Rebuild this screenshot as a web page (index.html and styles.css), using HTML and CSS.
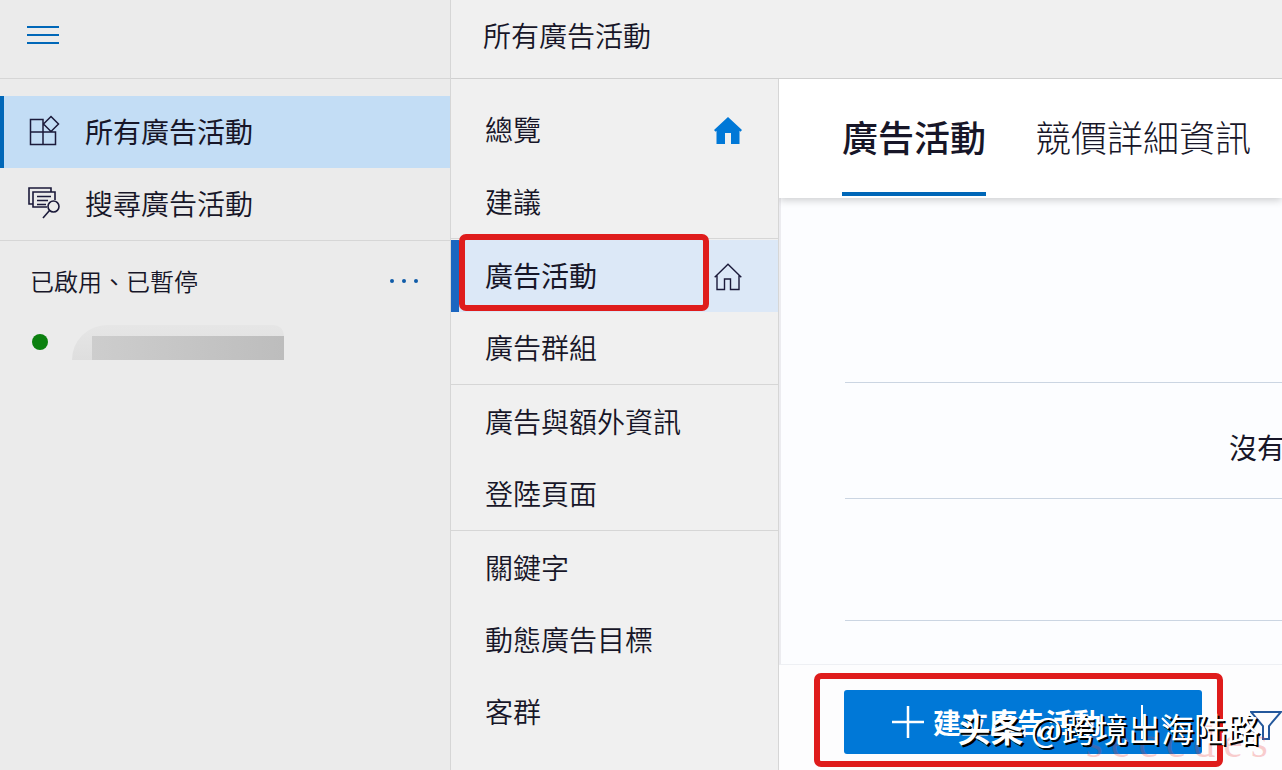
FILE: index.html
```html
<!DOCTYPE html>
<html lang="zh-Hant">
<head>
    <meta charset="UTF-8">
    <meta name="viewport" content="width=device-width, initial-scale=1.0">
    <title>所有廣告活動</title>
    <link rel="stylesheet" href="styles.css">
</head>
<body>
    <aside class="sidebar">
        <div class="sidebar-top">
            <button type="button" class="icon-button" aria-label="選單">
                <svg width="32" height="20" viewBox="0 0 32 20" stroke="#0067b8" stroke-width="2"><path d="M0 2h32M0 10h32M0 18h32"/></svg>
            </button>
        </div>
        <nav class="main-nav">
            <a href="#" class="main-link active">
                <svg width="32" height="32" viewBox="0 0 32 32" fill="none" stroke="#1b1a3a" stroke-width="1.5"><path d="M15 6V4.500H2.500v25h25V17H2.500M15 29.500V12M15 4.500V17M23 1.500l7.500 7.500-7.500 7.500L15.500 9z"/></svg>
                <span>所有廣告活動</span>
            </a>
            <a href="#" class="main-link">
                <svg width="32" height="32" viewBox="0 0 32 32" fill="none" stroke="#1b1a3a" stroke-width="1.600"><path d="M5 17H1V1h22v4M19 20H5V5h22v8M9 9.500h14M9 13.500h11M9 17.500h9"/><circle cx="25.500" cy="19.500" r="5.500"/><path d="M21.500 23.500L15 31"/></svg>
                <span>搜尋廣告活動</span>
            </a>
        </nav>
        <div class="status-filter">
            <span>已啟用、已暫停</span>
            <button type="button" class="icon-button" aria-label="更多">
                <svg width="32" height="8" viewBox="0 0 32 8" fill="#0f5ba8"><circle cx="4" cy="4" r="2"/><circle cx="16" cy="4" r="2"/><circle cx="28" cy="4" r="2"/></svg>
            </button>
        </div>
        <div class="account">
            <span class="dot"></span>
            <span class="account-name"></span>
        </div>
    </aside>

    <div class="page">
        <header class="page-header">
            <h1>所有廣告活動</h1>
        </header>
        <div class="page-body">
            <nav class="sub-nav">
                <div class="group">
                    <a href="#" class="sub-link">總覽
                        <svg width="28" height="28" viewBox="0 0 28 28" fill="#0078d7"><path d="M14 0l14 13-1.500 1.700-1-.9V27H17V16h-6v11H2.500V13.800l-1 .9L0 13z"/></svg>
                    </a>
                    <a href="#" class="sub-link">建議</a>
                </div>
                <div class="group">
                    <a href="#" class="sub-link active">廣告活動
                        <svg width="28" height="28" viewBox="0 0 28 28" fill="none" stroke="#1b1a3a" stroke-width="1.400"><path d="M.7 14.200L14 1.200l13.300 13M3 12.500V26.500h7.500V16h6v10.500H25V12.500"/></svg>
                        <span class="mark mark-nav"></span>
                    </a>
                    <a href="#" class="sub-link">廣告群組</a>
                </div>
                <div class="group">
                    <a href="#" class="sub-link">廣告與額外資訊</a>
                    <a href="#" class="sub-link">登陸頁面</a>
                </div>
                <div class="group">
                    <a href="#" class="sub-link">關鍵字</a>
                    <a href="#" class="sub-link">動態廣告目標</a>
                    <a href="#" class="sub-link">客群</a>
                </div>
            </nav>
            <main class="content">
                <div class="tabs">
                    <a href="#" class="tab active">廣告活動</a>
                    <a href="#" class="tab">競價詳細資訊</a>
                </div>
                <div class="chart">
                    <div class="chart-row first"></div>
                    <div class="chart-row message">沒有資料</div>
                    <div class="chart-row last"></div>
                </div>
                <div class="toolbar">
                    <button type="button" class="create">
                        <svg width="34" height="34" viewBox="0 0 34 34" stroke="#fff" stroke-width="2.500"><path d="M17 1v32M1 17h32"/></svg>
                        <span>建立廣告活動</span>
                        <svg class="split" width="46" height="34" viewBox="0 0 46 34" fill="none" stroke="#fff" stroke-width="2"><path d="M2 0v34M22 13l8 8 8-8"/></svg>
                        <span class="mark mark-create"></span>
                    </button>
                    <button type="button" class="icon-button filter" aria-label="篩選">
                        <svg width="32" height="30" viewBox="0 0 32 30" fill="none" stroke="#24589c" stroke-width="2"><path d="M1 1h30L19 15v13h-6V15z"/></svg>
                    </button>
                </div>
            </main>
        </div>
    </div>

    <div class="watermark-red">seccdes</div>
    <div class="watermark"><b>头条</b> @跨境出海陆路</div>
</body>
</html>
```
FILE: styles.css
```css
* {
    box-sizing: border-box;
}

body {
    margin: 0;
    height: 100vh;
    display: flex;
    overflow: hidden;
    position: relative;
    font-family: "Noto Sans CJK TC", "Liberation Sans", sans-serif;
    font-size: 28px;
    font-weight: 350;
    line-height: 40px;
    color: #171628;
    background: #fdfdfe;
}

a {
    color: inherit;
    text-decoration: none;
}

svg {
    flex: none;
    display: block;
}

button {
    font: inherit;
    border: none;
    cursor: pointer;
}

.icon-button {
    padding: 0;
    background: none;
}

/* left sidebar */
.sidebar {
    flex: 0 0 451px;
    background: #ebebeb;
    border-right: 1px solid #d6d6d6;
}

.sidebar-top {
    height: 79px;
    display: flex;
    align-items: flex-start;
    padding: 25px 27px;
    border-bottom: 1px solid #d6d6d6;
}

.main-nav {
    padding-top: 17px;
    border-bottom: 1px solid #d6d6d6;
}

.main-link {
    height: 72px;
    display: flex;
    align-items: center;
    gap: 25px;
    padding: 0 0 2px 28px;
}

    .main-link.active {
        padding-left: 24px;
        border-left: 4px solid #0067b8;
        background: #c3ddf5;
        font-weight: 400;
    }

.status-filter {
    height: 80px;
    display: flex;
    align-items: center;
    justify-content: space-between;
    padding: 0 30px;
    font-size: 24px;
}

.account {
    display: flex;
    align-items: flex-start;
    gap: 24px;
    padding: 4px 32px;
}

.dot {
    width: 16px;
    height: 16px;
    margin-top: 9px;
    border-radius: 50%;
    background: #0b800f;
}

.account-name {
    width: 212px;
    height: 35px;
    padding: 11px 0 0 20px;
    border-radius: 40px 12px 0 0;
    background: linear-gradient(#e6e6e6, #dedede);
}

    .account-name::before {
        content: "";
        display: block;
        height: 24px;
        background: linear-gradient(90deg, #cdcdcd, #bdbdbd);
    }

/* header */
.page {
    flex: 1;
    min-width: 0;
    display: flex;
    flex-direction: column;
}

.page-header {
    flex: 0 0 79px;
    padding: 15px 32px;
    background: #f0f0f0;
    border-bottom: 1px solid #d0d0d0;
}

    .page-header h1 {
        margin: 0;
        font-size: 28px;
        font-weight: 350;
    }

.page-body {
    flex: 1;
    min-height: 0;
    display: flex;
}

/* second level menu */
.sub-nav {
    flex: 0 0 328px;
    padding-top: 15px;
    background: #f0f0f0;
    border-right: 1px solid #d6d6d6;
}

.group + .group {
    padding-top: 1px;
    border-top: 1px solid #d6d6d6;
}

.sub-link {
    height: 72px;
    display: flex;
    align-items: center;
    justify-content: space-between;
    padding: 0 36px 2px 34px;
    position: relative;
}

    .sub-link svg {
        margin-top: 4px;
    }

    .sub-link.active {
        padding-left: 26px;
        border-left: 8px solid #1b66c0;
        background: #dce8f7;
        font-weight: 400;
    }

/* red highlight frames */
.mark {
    position: absolute;
    border: 6px solid #df1c1c;
    border-radius: 7px;
}

.mark-nav {
    top: -6px;
    bottom: 1px;
    left: 0;
    right: 69px;
}

.mark-create {
    top: -17px;
    bottom: -13px;
    left: -30px;
    right: -21px;
}

/* main content */
.content {
    flex: 1;
    min-width: 0;
    display: flex;
    flex-direction: column;
    overflow: hidden;
    background: #fdfdfe;
}

.tabs {
    flex: 0 0 119px;
    display: flex;
    gap: 49px;
    padding-left: 63px;
    overflow: hidden;
    white-space: nowrap;
    font-size: 36px;
    font-weight: 300;
    z-index: 1;
    background: #fff;
    box-shadow: 0 2px 8px rgba(0, 0, 0, 0.2);
}

.tab {
    height: 117px;
    padding-top: 37px;
}

    .tab.active {
        border-bottom: 4px solid #0067b8;
        font-weight: 500;
    }

.chart {
    flex: 1;
    padding-left: 64px;
    border-left: 2px solid #ececf0;
    background: #fcfdff;
    border-bottom: 1px solid #eef0f4;
}

.chart-row {
    border-bottom: 1px solid #cbd5e2;
}

.first {
    height: 185px;
}

.message {
    height: 116px;
    padding: 44px 0 0 384px;
    overflow: hidden;
    white-space: nowrap;
    font-weight: 400;
}

.last {
    height: 122px;
}

.toolbar {
    flex: 0 0 105px;
    display: flex;
    align-items: flex-start;
    gap: 48px;
    padding: 25px 0 0 65px;
}

.create {
    flex: 0 0 358px;
    height: 64px;
    display: flex;
    align-items: center;
    gap: 8px;
    padding: 0 16px 0 47px;
    position: relative;
    border-radius: 3px;
    background: #0078d7;
    color: #fff;
    font-weight: 700;
}

.split {
    margin-left: auto;
}

.filter {
    margin-top: 21px;
}

.watermark,
.watermark-red {
    position: absolute;
    white-space: nowrap;
    pointer-events: none;
}

.watermark {
    right: 22px;
    bottom: 22px;
    font-family: "Noto Sans CJK SC", sans-serif;
    font-size: 33px;
    font-weight: 400;
    color: #fff;
    text-shadow: 2px 2px 0 #000;
}

.watermark-red {
    right: 6px;
    bottom: 7px;
    font-family: "Liberation Serif", serif;
    font-size: 44px;
    letter-spacing: 8px;
    color: rgba(235, 60, 60, 0.25);
}
```
